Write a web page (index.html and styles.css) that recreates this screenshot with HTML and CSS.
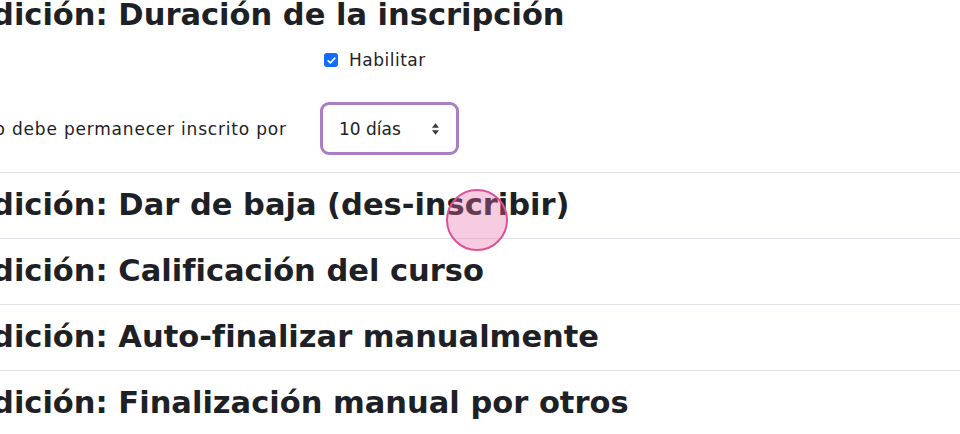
FILE: index.html
```html
<!DOCTYPE html>
<html lang="es">
<head>
<meta charset="utf-8">
<title>Condiciones</title>
<link rel="stylesheet" href="styles.css">
</head>
<body>
<div class="page">
  <section class="block">
    <h3 class="heading">Condición: Duración de la inscripción</h3>
    <div class="form-row row-check">
      <div class="label"></div>
      <div class="field">
        <label class="check"><span class="box"><svg viewBox="0 0 16 16" width="11" height="11"><path d="M3.2 8.4 6.4 11.4 12.8 4.6" fill="none" stroke="#fff" stroke-width="2.4" stroke-linecap="round" stroke-linejoin="round"/></svg></span>Habilitar</label>
      </div>
    </div>
    <div class="form-row row-select">
      <div class="label"><span class="label-text">El usuario debe permanecer inscrito por</span></div>
      <div class="field">
        <div class="select"><span>10 días</span><svg viewBox="0 0 10 16" width="9" height="14"><path d="M5 1.5 9 6.5H1z M5 14.5 9 9.5H1z" fill="#343a40"/></svg></div>
      </div>
    </div>
  </section>
  <section class="block sep"><h3 class="heading">Condición: Dar de baja (des-inscribir)</h3></section>
  <section class="block sep"><h3 class="heading">Condición: Calificación del curso</h3></section>
  <section class="block sep"><h3 class="heading">Condición: Auto-finalizar manualmente</h3></section>
  <section class="block sep"><h3 class="heading">Condición: Finalización manual por otros</h3></section>
</div>
<div class="click"></div>
</body>
</html>
```
FILE: styles.css
```css
html, body {
  margin: 0;
  padding: 0;
  background: #fff;
  overflow: hidden;
}
body {
  font-family: "DejaVu Sans", "Liberation Sans", sans-serif;
  color: #1d2125;
  width: 960px;
  height: 434px;
  position: relative;
}
.page {
  margin-left: -73px;
  margin-top: -5px;
}
.heading {
  margin: 0;
  font-size: 30.5px;
  font-weight: 700;
  line-height: 40px;
  color: #1d2125;
}
.block.sep {
  border-top: 1px solid #dee2e6;
  padding: 12px 0 13px;
}
.block:first-child {
  padding-bottom: 17px;
}
.form-row {
  display: flex;
  align-items: center;
}
.label {
  width: 393px;
  font-size: 17px;
  letter-spacing: 0.8px;
  color: #1d2125;
  white-space: nowrap;
}
.label-text {
  margin-left: -13px;
}
.row-check {
  margin-top: 13px;
  height: 24px;
}
.row-select {
  margin-top: 30px;
}
.check {
  display: flex;
  align-items: center;
  font-size: 17px;
  letter-spacing: 0.5px;
  color: #1d2125;
}
.box {
  width: 14px;
  height: 14px;
  border-radius: 3px;
  background: #0f6cff;
  display: flex;
  align-items: center;
  justify-content: center;
  margin-left: 4px;
  margin-right: 11px;
}
.select {
  border: 3px solid #a97ec4;
  border-radius: 9px;
  display: flex;
  align-items: center;
  justify-content: space-between;
  padding: 0 16px 0 16px;
  box-sizing: border-box;
  height: 53px;
  width: 139px;
  font-size: 17px;
  color: #1d2125;
}
.click {
  position: absolute;
  left: 446px;
  top: 189px;
  width: 62px;
  height: 62px;
  border-radius: 50%;
  border: 2px solid #de4f98;
  background: rgba(232, 110, 165, 0.35);
  box-sizing: border-box;
}
```
